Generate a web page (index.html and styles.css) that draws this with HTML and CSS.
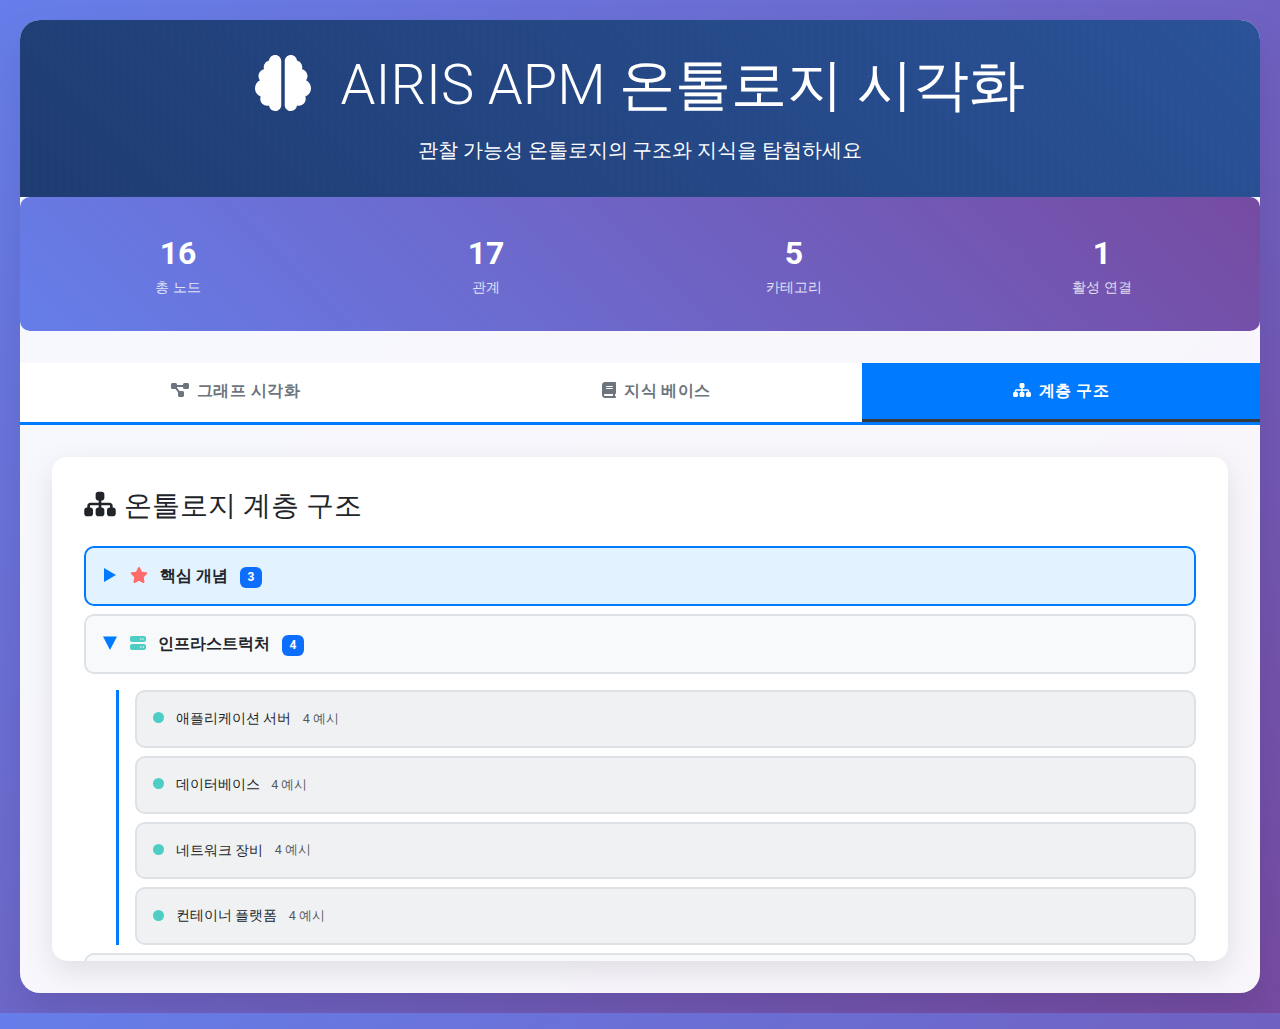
FILE: index.html
```html
<!DOCTYPE html>
<html lang="ko">
<head>
<meta charset="utf-8">
<title>AIRIS APM 온톨로지 시각화</title>
<link rel="stylesheet" href="styles.css">
</head>
<body>
<svg width="0" height="0" class="defs">
<symbol id="sitemap" viewBox="0 0 576 512"><path d="M208 80c0-26.500 21.500-48 48-48l64 0c26.500 0 48 21.500 48 48l0 64c0 26.500-21.500 48-48 48l-8 0 0 40 152 0c30.900 0 56 25.100 56 56l0 32 8 0c26.500 0 48 21.500 48 48l0 64c0 26.500-21.500 48-48 48l-64 0c-26.500 0-48-21.500-48-48l0-64c0-26.500 21.500-48 48-48l8 0 0-32c0-4.400-3.600-8-8-8l-152 0 0 40 8 0c26.500 0 48 21.500 48 48l0 64c0 26.500-21.500 48-48 48l-64 0c-26.500 0-48-21.500-48-48l0-64c0-26.500 21.500-48 48-48l8 0 0-40-152 0c-4.400 0-8 3.600-8 8l0 32 8 0c26.500 0 48 21.500 48 48l0 64c0 26.500-21.500 48-48 48l-64 0c-26.500 0-48-21.500-48-48l0-64c0-26.500 21.500-48 48-48l8 0 0-32c0-30.900 25.100-56 56-56l152 0 0-40-8 0c-26.500 0-48-21.500-48-48l0-64z"/></symbol>
</svg>
<main class="container">
  <header class="header">
    <svg class="grid-lines" width="100%" height="100%"><defs><pattern id="grid" width="8" height="8" patternUnits="userSpaceOnUse"><path d="M8 .5H.5V8" fill="none" stroke="#fff" stroke-opacity=".01"/></pattern></defs><rect width="100%" height="100%" fill="url(#grid)"/></svg>
    <h1><svg class="brain" viewBox="0 0 512 512"><path d="M184 0c30.900 0 56 25.100 56 56l0 400c0 30.900-25.100 56-56 56-28.900 0-52.700-21.900-55.700-50.100-5.200 1.400-10.700 2.100-16.300 2.100-35.300 0-64-28.700-64-64 0-7.400 1.300-14.600 3.600-21.200C21.400 367.400 0 338.200 0 304c0-31.900 18.700-59.500 45.800-72.300C37.100 220.800 32 207 32 192c0-30.700 21.600-56.300 50.400-62.600C80.800 123.900 80 118 80 112c0-29.900 20.600-55.100 48.300-62.100C131.300 21.900 155.100 0 184 0zM328 0c28.900 0 52.600 21.900 55.700 49.900 27.800 7 48.300 32.100 48.300 62.100 0 6-.8 11.900-2.400 17.400 28.800 6.200 50.400 31.900 50.400 62.600 0 15-5.100 28.800-13.800 39.700C493.300 244.500 512 272.100 512 304c0 34.200-21.400 63.400-51.600 74.800 2.300 6.600 3.600 13.800 3.600 21.200 0 35.300-28.700 64-64 64-5.600 0-11.100-.7-16.300-2.100-3 28.200-26.800 50.100-55.700 50.100-30.900 0-56-25.100-56-56l0-400c0-30.900 25.100-56 56-56z"/></svg><span>AIRIS APM 온톨로지 시각화</span></h1>
    <p>관찰 가능성 온톨로지의 구조와 지식을 탐험하세요</p>
  </header>
  <section class="stats">
    <div><strong>16</strong><span>총 노드</span></div>
    <div><strong>17</strong><span>관계</span></div>
    <div><strong>5</strong><span>카테고리</span></div>
    <div><strong>1</strong><span>활성 연결</span></div>
  </section>
  <nav class="tabs">
    <button class="tab tab-graph"><svg class="wide" viewBox="0 0 576 512"><path d="M0 80C0 53.500 21.500 32 48 32l96 0c26.500 0 48 21.500 48 48l0 16 192 0 0-16c0-26.500 21.500-48 48-48l96 0c26.500 0 48 21.500 48 48l0 96c0 26.500-21.500 48-48 48l-96 0c-26.500 0-48-21.500-48-48l0-16-192 0 0 16c0 1.700-.1 3.400-.3 5L272 288l96 0c26.500 0 48 21.500 48 48l0 96c0 26.500-21.500 48-48 48l-96 0c-26.500 0-48-21.500-48-48l0-96c0-1.700.1-3.400.3-5L144 224l-96 0c-26.500 0-48-21.500-48-48L0 80z"/></svg><span>그래프 시각화</span></button>
    <button class="tab tab-base"><svg class="narrow" viewBox="0 0 448 512"><path d="M96 0C43 0 0 43 0 96L0 416c0 53 43 96 96 96l320 0c17.700 0 32-14.300 32-32s-14.300-32-32-32l0-64c17.700 0 32-14.300 32-32l0-320c0-17.700-14.300-32-32-32L96 0zm0 384l256 0 0 64L96 448c-17.700 0-32-14.300-32-32s14.300-32 32-32zm48-224l192 0c8.800 0 16-7.200 16-16s-7.200-16-16-16l-192 0c-8.800 0-16 7.200-16 16s7.200 16 16 16zm0 64l192 0c8.800 0 16-7.200 16-16s-7.200-16-16-16l-192 0c-8.800 0-16 7.200-16 16s7.200 16 16 16z" fill-rule="evenodd"/></svg><span>지식 베이스</span></button>
    <button class="tab tab-tree active"><svg class="wide"><use href="#sitemap"/></svg><span>계층 구조</span></button>
  </nav>
  <section class="content">
    <div class="card">
      <h2><svg><use href="#sitemap"/></svg><span>온톨로지 계층 구조</span></h2>
      <div class="node selected"><svg class="arrow" viewBox="0 0 14 16"><path d="M1 1V15L13 8z"/></svg><svg class="star" viewBox="0 0 576 512"><path d="M316.900 18C311.600 7 300.400 0 288.100 0s-23.400 7-28.800 18L195 150.300 51.400 171.500c-12 1.800-22 10.200-25.700 21.700s-.7 24.200 7.900 32.700L137.800 329 113.200 474.700c-2 12 3 24.200 12.900 31.300s23 8 33.800 2.300l128.300-68.500 128.300 68.500c10.800 5.700 23.900 4.900 33.800-2.300s14.900-19.300 12.900-31.300L438.500 329 542.700 225.900c8.600-8.500 11.700-21.200 7.900-32.700s-13.700-19.900-25.700-21.700L381.200 150.300 316.900 18z"/></svg><strong>핵심 개념</strong><span class="badge">3</span></div>
      <div class="node"><svg class="arrow" viewBox="0 0 14 16"><path d="M0 1.500H14L7 15z"/></svg><svg class="server" viewBox="0 0 512 512"><path fill-rule="evenodd" d="M64 32C28.700 32 0 60.700 0 96l0 64c0 35.300 28.700 64 64 64l384 0c35.300 0 64-28.700 64-64l0-64c0-35.300-28.700-64-64-64L64 32zm280 72a24 24 0 1 1 0 48 24 24 0 1 1 0-48zm48 24a24 24 0 1 1 48 0 24 24 0 1 1-48 0zM64 288c-35.300 0-64 28.700-64 64l0 64c0 35.300 28.700 64 64 64l384 0c35.300 0 64-28.700 64-64l0-64c0-35.300-28.700-64-64-64L64 288zm280 72a24 24 0 1 1 0 48 24 24 0 1 1 0-48zm56 24a24 24 0 1 1 48 0 24 24 0 1 1-48 0z"/></svg><strong>인프라스트럭처</strong><span class="badge">4</span></div>
      <div class="children">
        <div class="leaf"><i></i><span>애플리케이션 서버</span><small>4 예시</small></div>
        <div class="leaf"><i></i><span>데이터베이스</span><small>4 예시</small></div>
        <div class="leaf"><i></i><span>네트워크 장비</span><small>4 예시</small></div>
        <div class="leaf"><i></i><span>컨테이너 플랫폼</span><small>4 예시</small></div>
      </div>
      <div class="node"></div>
    </div>
  </section>
</main>
</body>
</html>
```
FILE: styles.css
```css
* { box-sizing: border-box; }
html { overflow: hidden; }
body {
  margin: 0; padding: 20px; height: 1013px;
  font-family: Roboto, "Noto Sans", "Liberation Sans", sans-serif;
  font-size: 16px; line-height: 1.5; color: #212529;
  background: linear-gradient(135deg, #667eea 0%, #764ba2 100%);
}
svg { fill: currentColor; flex: none; }
.defs { position: absolute; }
.container { height: 973px; border-radius: 20px; overflow: hidden; background: rgba(255,255,255,.95); box-shadow: 0 20px 40px rgba(0,0,0,.1); }
.header { position: relative; height: 177px; padding: 32px; text-align: center; color: #fff; background: linear-gradient(45deg, #1e3c72, #2a5298); }
.grid-lines { position: absolute; inset: 0; }
h1 { margin: 0 0 16px; height: 67px; display: flex; justify-content: center; align-items: center; gap: 29.500px; font-size: 56px; font-weight: 300; line-height: 67px; }
.brain { width: 56px; height: 56px; margin-top: -5px; }
.header p { margin: 0; font-size: 20px; font-weight: 300; line-height: 30px; }
.stats { height: 134px; padding: 32px 4px; display: grid; grid-template-columns: repeat(4, 1fr); border-radius: 10px; color: #fff; background: linear-gradient(45deg, #667eea, #764ba2); }
.stats div { display: flex; flex-direction: column; align-items: center; }
.stats strong { font-size: 32px; line-height: 48px; }
.stats span { font-size: 14.400px; line-height: 22px; opacity: .8; }
.tabs { margin-top: 32px; height: 62px; display: flex; background: #fff; border-bottom: 3px solid #007bff; }
.tab { display: flex; align-items: center; justify-content: center; gap: 8px; padding: 0 0 3px; border: 0; background: #fff; color: #6c757d; font: 600 16px/24px Roboto, "Noto Sans", "Liberation Sans", sans-serif; letter-spacing: .5px; }
.tab-graph { width: 431px; }
.tab-base { width: 411px; }
.tab-tree { flex: 1; }
.tab.active { background: #007bff; color: #fff; border-bottom: 3px solid #343a40; padding: 0; }
.tab svg { margin-top: -2px; height: 16px; }
.wide { width: 18px; }
.narrow { width: 14px; }
.content { padding: 32px; }
.card { height: 504px; padding: 32px; overflow: hidden; background: #fff; border-radius: 15px; box-shadow: 0 10px 30px rgba(0,0,0,.1); }
h2 { margin: 0 0 24px; display: flex; align-items: center; gap: 8px; height: 33px; font-size: 28px; font-weight: 400; line-height: 33px; }
h2 svg { width: 32px; height: 28px; margin-top: -3px; }
.node { display: flex; align-items: center; height: 60px; padding: 0 17px 2px; margin-bottom: 8px; border: 2px solid #dee2e6; border-radius: 10px; background: #f8f9fa; }
.node.selected { background: #e3f2ff; border-color: #007bff; }
.arrow { width: 14px; height: 16px; color: #007bff; }
.node strong { margin: 2px 0 0 12px; font-weight: 600; }
.star { width: 18px; height: 16px; margin-left: 13px; color: #ff6b6b; }
.server { width: 16px; height: 16px; margin-left: 13px; color: #4ecdc4; }
.badge { margin: 4px 0 0 12px; width: 22px; height: 21px; border-radius: 6px; background: #0d6efd; color: #fff; font-size: 12px; font-weight: 700; line-height: 21px; text-align: center; }
.children { margin: 16px 0 8px 32px; padding-left: 16px; border-left: 3px solid #007bff; display: flex; flex-direction: column; gap: 8px; }
.leaf { display: flex; align-items: center; height: 57.750px; padding: 0 16px; border: 2px solid #dee2e6; border-radius: 10px; background: #eff1f3; }
.leaf i { width: 11px; height: 11px; margin-top: -2px; border-radius: 50%; background: #4ecdc4; }
.leaf span { margin-left: 12px; font-size: 14.400px; letter-spacing: -.05px; }
.leaf small { margin: 1px 0 0 11.500px; font-size: 12.600px; color: rgba(33,37,41,.75); }
```
